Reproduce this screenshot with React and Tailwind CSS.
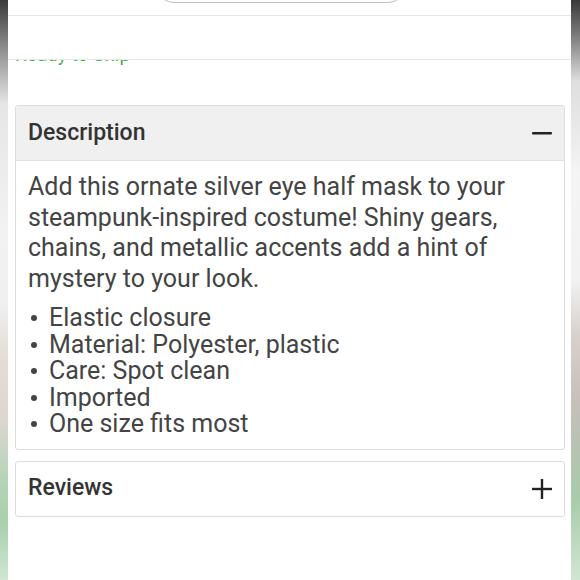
import React from "react";

const bullets = [
  "Elastic closure",
  "Material: Polyester, plastic",
  "Care: Spot clean",
  "Imported",
  "One size fits most",
];

function Minus() {
  return (
    <svg width="20" height="20" viewBox="0 0 20 20" className="block">
      <rect x="0" y="9" width="20" height="2.4" rx="1" fill="#222" />
    </svg>
  );
}

function Plus() {
  return (
    <svg width="20" height="20" viewBox="0 0 20 20" className="block">
      <rect x="0" y="8.8" width="20" height="2.4" fill="#222" />
      <rect x="8.8" y="0" width="2.4" height="20" fill="#222" />
    </svg>
  );
}

export default function App() {
  return (
    <div className="flex w-[580px] h-[580px] overflow-hidden bg-white font-['Roboto',sans-serif]">
      <div className="w-[8px] shrink-0 bg-[linear-gradient(to_bottom,#3a3a3a_0%,#8a8a8a_8%,#e6e6e6_18%,#f2f2f2_40%,#f0f0f0_52%,#e4dcd6_62%,#ddd6d0_72%,#b8d4b8_82%,#a9cfac_90%,#cfe6d2_100%)]" />

      <div className="flex-1 flex flex-col">
        {/* top bar remains */}
        <div className="h-[15px] overflow-hidden flex justify-center">
          <div className="w-[256px] h-[44px] -mt-[41px] mr-[18px] rounded-full border border-[#bdbdbd] bg-white shrink-0" />
        </div>
        <div className="h-[45px] border-y border-[#e8e8e8] bg-white" />
        <div className="h-[7px] overflow-hidden pl-[7px]">
          <div className="-mt-[15px] text-[19px] leading-[20px] text-[#3cb544]">Ready to Ship</div>
        </div>

        <div className="mt-[38px] mx-[7px] mr-[6px] border border-[#dcdcdc] rounded-[3px] overflow-hidden">
          <div className="h-[55px] bg-[#f0f0f0] border-b border-[#e2e2e2] flex items-center justify-between pl-[12px] pr-[12px]">
            <span className="text-[23px] font-medium text-[#333]">Description</span>
            <Minus />
          </div>
          <div className="px-[12px] pt-[11px] pb-[11px] text-[#444]">
            <p className="text-[25px] leading-[30.5px]">
              Add this ornate silver eye half mask to your steampunk-inspired costume! Shiny gears, chains, and metallic accents add a hint of mystery to your look.
            </p>
            <ul className="mt-[11px]">
              {bullets.map((b) => (
                <li key={b} className="flex items-center text-[25px] leading-[26.5px]">
                  <span className="w-[21px] shrink-0 pl-[3px]">
                    <span className="block w-[6px] h-[6px] rounded-full bg-[#444]" />
                  </span>
                  <span>{b}</span>
                </li>
              ))}
            </ul>
          </div>
        </div>

        <div className="mt-[11px] mx-[7px] mr-[6px] h-[56px] border border-[#dcdcdc] rounded-[3px] flex items-center justify-between px-[12px]">
          <span className="text-[23px] font-medium text-[#333]">Reviews</span>
          <Plus />
        </div>
      </div>

      <div className="w-[9px] shrink-0 bg-[linear-gradient(to_bottom,#3a3a3a_0%,#7a7a7a_6%,#dedede_14%,#f4f4f4_30%,#f2f2f2_48%,#d8d0ca_58%,#c8c0ba_68%,#b8c2b4_76%,#a8cca8_86%,#cfe6d2_100%)]" />
    </div>
  );
}
